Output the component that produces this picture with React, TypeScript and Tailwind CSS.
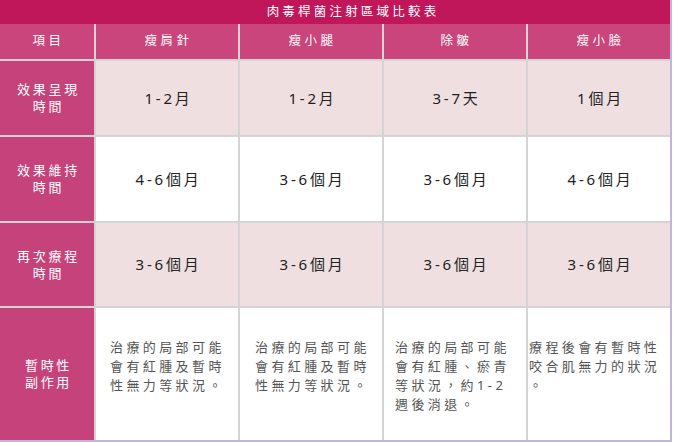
import { Fragment } from "react";

const font = { fontFamily: '"Noto Sans", "Noto Sans CJK TC", sans-serif' };

const headers = ["瘦肩針", "瘦小腿", "除皺", "瘦小臉"];

const rows: { label: string[]; values: string[]; tint: boolean; h: string }[] = [
  { label: ["效果呈現", "時間"], values: ["1-2月", "1-2月", "3-7天", "1個月"], tint: true, h: "h-[74px]" },
  { label: ["效果維持", "時間"], values: ["4-6個月", "3-6個月", "3-6個月", "4-6個月"], tint: false, h: "h-[84px]" },
  { label: ["再次療程", "時間"], values: ["3-6個月", "3-6個月", "3-6個月", "3-6個月"], tint: true, h: "h-[83px]" },
];

const notes: { lines: string[]; pad: string }[] = [
  { lines: ["治療的局部可能", "會有紅腫及暫時", "性無力等狀況。"], pad: "pl-[14px]" },
  { lines: ["治療的局部可能", "會有紅腫及暫時", "性無力等狀況。"], pad: "pl-[15px]" },
  { lines: ["治療的局部可能", "會有紅腫、瘀青", "等狀況，約1-2", "週後消退。"], pad: "pl-[11px]" },
  { lines: ["療程後會有暫時性", "咬合肌無力的狀況", "。"], pad: "pl-[1px]" },
];

function Label({ lines, h }: { lines: string[]; h: string }) {
  return (
    <div className={`${h} bg-[#c6427a] flex flex-col items-center justify-center text-white text-[13px] leading-[17px] tracking-[2.7px]`}>
      {lines.map((l) => (
        <span key={l} className="pl-[3px]">{l}</span>
      ))}
    </div>
  );
}

export default function App() {
  return (
    <div className="w-[673px] h-[442px] bg-white" style={font}>
      <div className="w-[672px] border-r-2 border-b-2 border-[#c2b6d8]">
        <div className="h-[24px] bg-[#c0165a] flex items-center justify-center pl-[36px] text-white text-[12.5px] tracking-[3.2px]">
          肉毒桿菌注射區域比較表
        </div>
        <div className="grid grid-cols-[94px_142px_142px_142px_142px] gap-[2px] bg-[#d5d3d5]">
          <div className="h-[35px] bg-[#c9457b] flex items-center justify-center text-white text-[12.5px] tracking-[3.5px] pl-[3px]">
            項目
          </div>
          {headers.map((t) => (
            <div key={t} className="h-[35px] bg-[#c9457b] flex items-center justify-center text-white text-[12.5px] tracking-[3.5px] pl-[3px]">
              {t}
            </div>
          ))}

          {rows.map((r) => (
            <Fragment key={r.label[0]}>
              <Label lines={r.label} h={r.h} />
              {r.values.map((v, i) => (
                <div
                  key={i}
                  className={`${r.h} ${r.tint ? "bg-[#f0dfe0]" : "bg-white"} flex items-center justify-center text-[#222] text-[15px] tracking-[2.8px] pl-[3px]`}
                >
                  {v}
                </div>
              ))}
            </Fragment>
          ))}

          <Label lines={["暫時性", "副作用"]} h="h-[132px]" />
          {notes.map((n, i) => (
            <div key={i} className={`h-[132px] bg-white ${n.pad} pt-[30px] text-[#555] text-[13px] leading-[19px] tracking-[3.4px] whitespace-nowrap`}>
              {n.lines.map((l, j) => (
                <div key={j}>{l}</div>
              ))}
            </div>
          ))}
        </div>
      </div>
    </div>
  );
}
